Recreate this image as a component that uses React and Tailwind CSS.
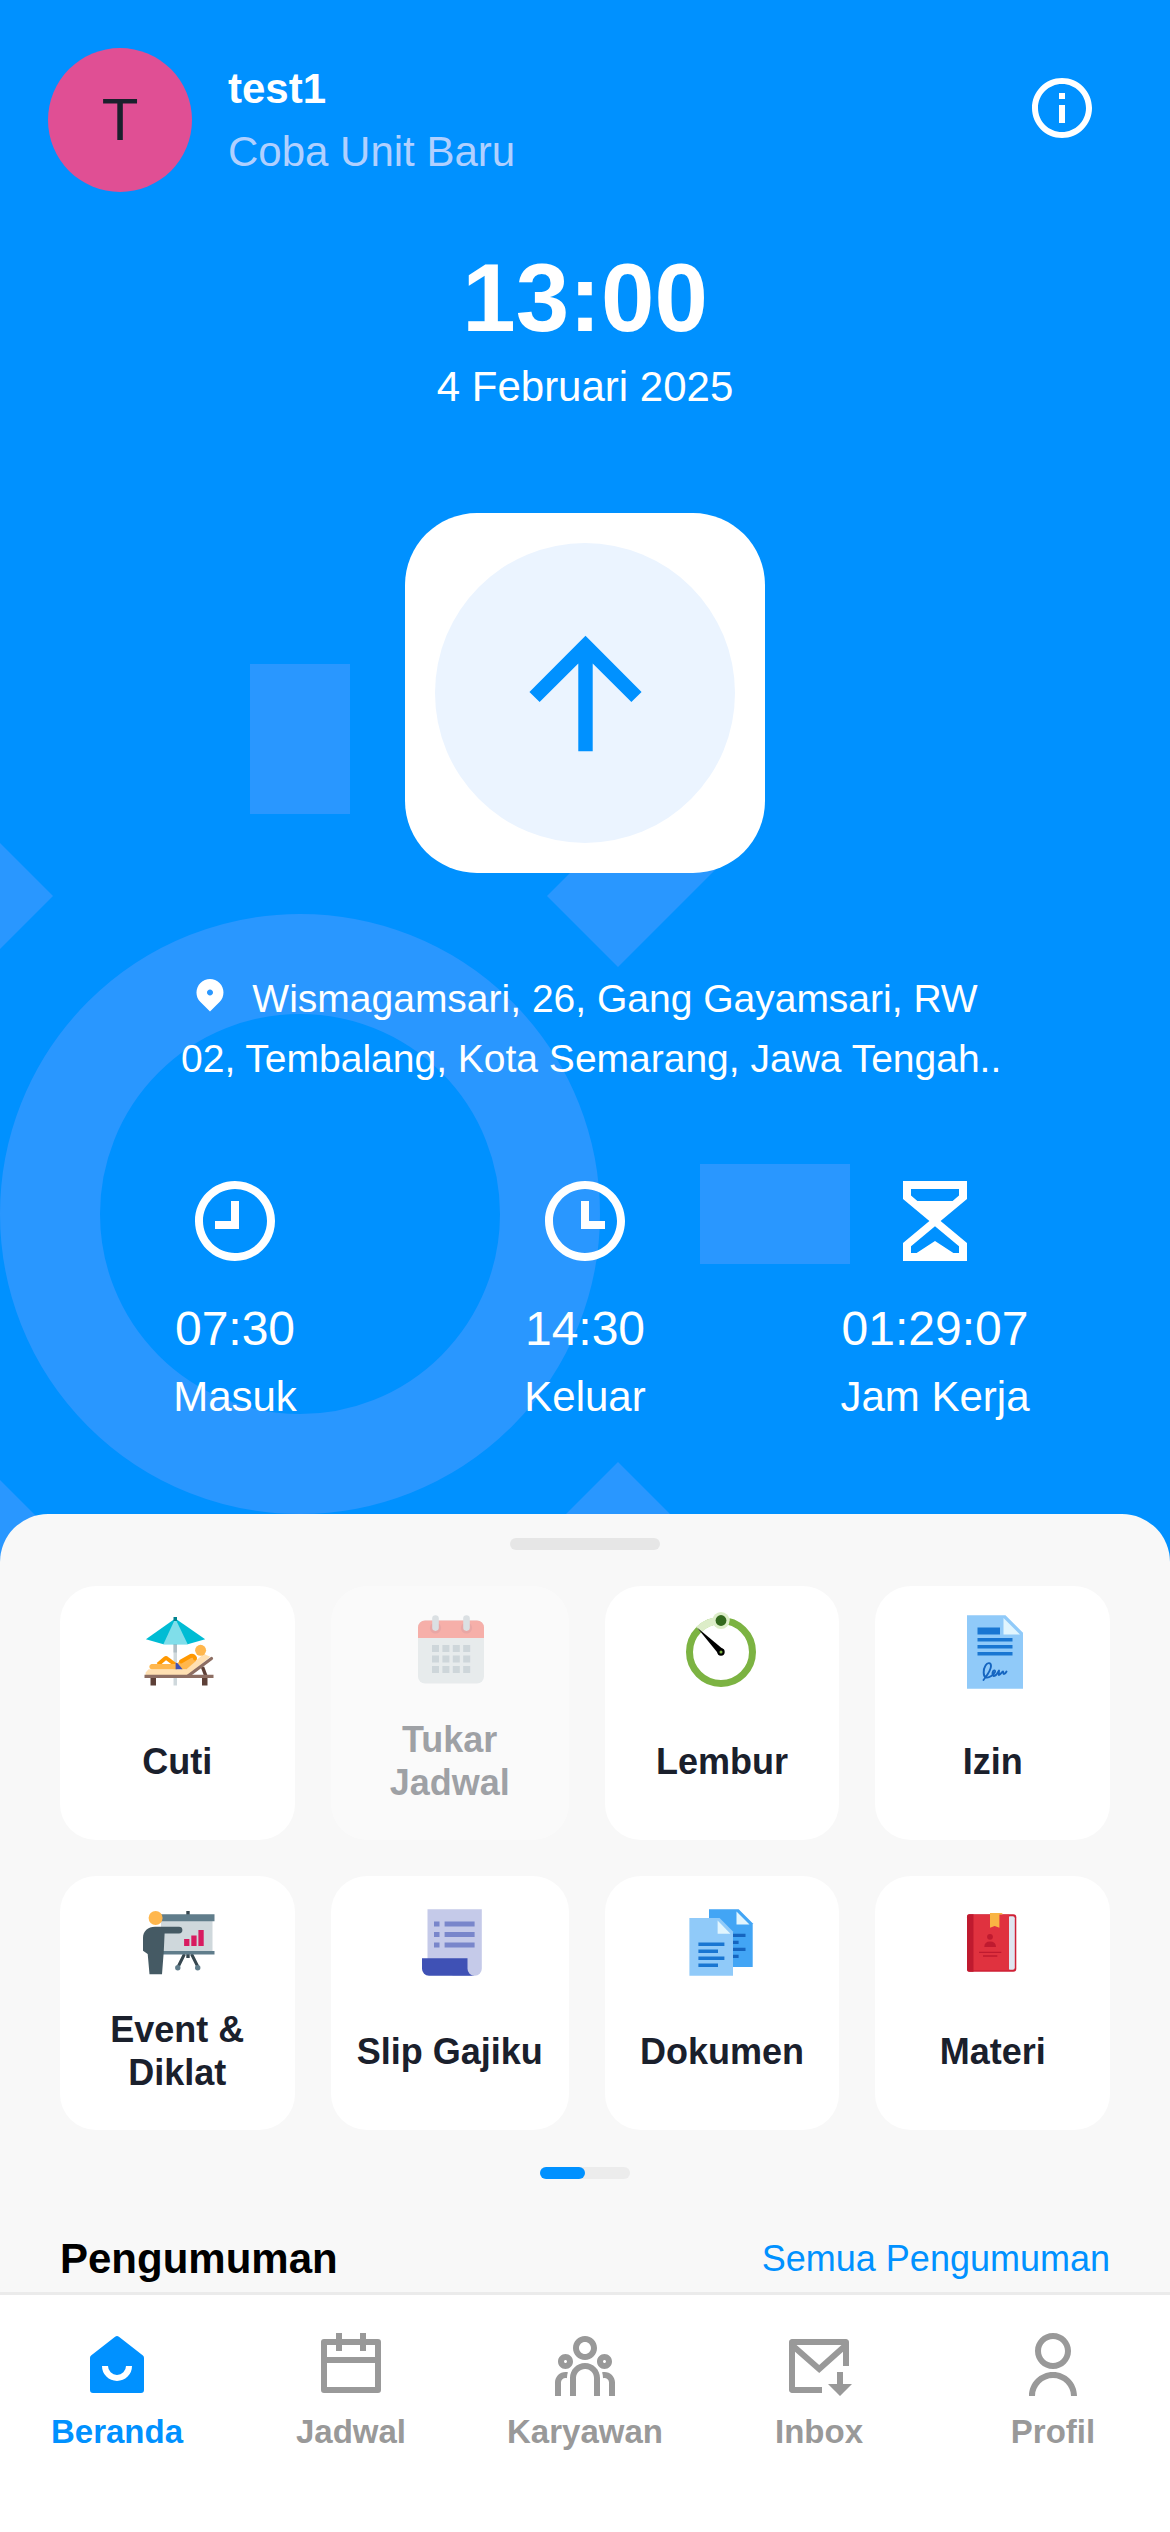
import React from "react";
import {
  RiArrowUpLine,
  RiInformationLine,
  RiMailDownloadLine,
  RiMapPin2Fill,
  RiTeamLine,
  RiTimeLine,
  RiUserLine,
} from "react-icons/ri";

function Backdrop() {
  return (
    <svg
      className="absolute left-0 top-0 h-[1600px] w-[1170px]"
      viewBox="0 0 1170 1600"
      fill="#2997ff"
      aria-hidden="true"
    >
      <rect x="250" y="664" width="100" height="150" />
      <rect x="700" y="1164" width="150" height="100" />
      <path d="M618 967l-71-71 106-106 71 71z" />
      <path d="M-18 967l71-71-106-106-71 71z" />
      <path d="M618 1462l71 71-106 106-71-71z" />
      <path d="M-18 1462l71 71-106 106-71-71z" />
      <circle cx="300" cy="1214" r="250" fill="none" stroke="#2997ff" strokeWidth="100" />
    </svg>
  );
}

function Art({ children }) {
  return (
    <svg className="h-[84px] w-[84px] shrink-0" viewBox="0 0 84 84" aria-hidden="true">
      {children}
    </svg>
  );
}

function LeaveArt() {
  return (
    <Art>
      <path d="M38.5 34h3.5v41.5h-3.5z" fill="#cfd8dc" />
      <path d="M38.5 34h3.5v8.500h-3.500z" fill="#b0bec5" />
      <path d="M40.300 8.500L10.900 29.300l17.500 5h24.300l17.500-5z" fill="#00bcd4" />
      <path d="M40.300 8.500L28.400 34.300h24.300z" fill="#80deea" />
      <path d="M38.500 7h3.500v4h-3.500z" fill="#00838f" />
      <path d="M10.600 65v-2.600l3-3.100H51l17.800-15.600 6.400 3L53.500 65z" fill="#ffe0b2" />
      <path d="M23 54.500l7-6q1-.8 2 0l8 6" fill="none" stroke="#ff9800" strokeWidth="4" strokeLinejoin="round" />
      <path d="M16.500 54H42v5.300H16.500a2.700 2.700 0 010-5.300z" fill="#ffb74d" />
      <path d="M42 53.300l5-3.300 11-4 4 1-1 4-9.500 8.300H46z" fill="#ffb74d" />
      <path d="M46 51.500l9.500-5.500q4-1 4.500 2.500" fill="none" stroke="#ff9800" strokeWidth="4" strokeLinecap="round" />
      <path d="M40.600 52.700l2 .6 5 6h-7z" fill="#3f51b5" />
      <circle cx="65.600" cy="40.300" r="5.500" fill="#ffb74d" />
      <path d="M67.500 57l3.200 8.500" stroke="#5d4037" strokeWidth="3.500" />
      <path d="M53 66l23.500-17.500" stroke="#8d6e63" strokeWidth="3.200" strokeLinecap="round" />
      <path d="M15.500 68H21v7.400h-5.500zM67 68h5.500v7.400H67z" fill="#5d4037" />
      <path d="M9.500 64.700h69V68h-69z" fill="#8d6e63" />
    </Art>
  );
}

function CalendarArt() {
  return (
    <Art>
      <rect x="10" y="10.500" width="66" height="63" rx="7" fill="#cfd8dc" />
      <path d="M10 28V17.500a7 7 0 017-7h52a7 7 0 017 7V28z" fill="#f44336" />
      <circle cx="27.500" cy="18" r="5.600" fill="#c62828" opacity=".7" />
      <circle cx="58.500" cy="18" r="5.600" fill="#c62828" opacity=".7" />
      <rect x="24.200" y="5.300" width="6.600" height="15.600" rx="3.300" fill="#b0bec5" />
      <rect x="55.200" y="5.300" width="6.600" height="15.600" rx="3.300" fill="#b0bec5" />
      <path
        d="M24 35h7v7h-7zM34.400 35h7v7h-7zM44.800 35h7v7h-7zM55.200 35h7v7h-7zM24 45.500h7v7h-7zM34.400 45.500h7v7h-7zM44.800 45.500h7v7h-7zM55.200 45.500h7v7h-7zM24 56h7v7h-7zM34.400 56h7v7h-7zM44.800 56h7v7h-7zM55.200 56h7v7h-7z"
        fill="#90a4ae"
      />
    </Art>
  );
}

function OvertimeArt() {
  return (
    <Art>
      <circle cx="41" cy="42" r="31.500" fill="none" stroke="#7cb342" strokeWidth="7" />
      <path d="M18.700 19.700A31.500 31.500 0 0149 11.500" fill="none" stroke="#dcedc8" strokeWidth="7.400" />
      <circle cx="41" cy="10.500" r="8.600" fill="#dcedc8" />
      <circle cx="41" cy="10.500" r="5.400" fill="#33691e" />
      <path d="M17 17.500L44 40l-5 4.500z" fill="#000" />
      <circle cx="41" cy="42" r="3.700" fill="#000" />
      <circle cx="41" cy="42" r="1.500" fill="#7cb342" />
    </Art>
  );
}

function PermitArt() {
  return (
    <Art>
      <path d="M16 5.300h38.500L72 22.800v56H16z" fill="#90caf9" />
      <path d="M52.500 8v16.600H69z" fill="#e1f5fe" />
      <path d="M26.500 17.500H49v7H26.500zM26.500 28h35v3.500h-35zM26.500 35h35v3.500h-35zM26.500 42h35v3.500h-35z" fill="#1976d2" />
      <path
        d="M32.500 70c2-3 7.500-9 7.500-14 0-3.500-3.500-4-5.500-.5-2.500 4-2.500 11 .5 12 3 1 8-3 9-5.500.6-2.500-2-2-2.500 1s1.500 4 4 1.500l2.500-4c0 2-.5 3.500 0 4.500 2-1 3-3.500 4-3.500.5.500 0 2.500 1 2.500s2-1.500 2.500-2.500"
        fill="none"
        stroke="#1565c0"
        strokeWidth="1.900"
        strokeLinecap="round"
        strokeLinejoin="round"
      />
    </Art>
  );
}

function EventArt() {
  return (
    <Art>
      <path d="M51.300 11h3.400v4h-3.400zM51.300 54h3.400v4h-3.400z" fill="#37474f" />
      <path d="M49.500 54l-6.500 13M56.500 54L63 67" stroke="#37474f" strokeWidth="3" />
      <circle cx="42.800" cy="67.700" r="2.700" fill="#607d8b" />
      <circle cx="62.700" cy="67.700" r="2.700" fill="#607d8b" />
      <path d="M26 21h51.500v31H26z" fill="#cfd8dc" />
      <path d="M26 14.300h53.500v7H26zM26 51h53.500v3.400H26z" fill="#607d8b" />
      <path d="M49.100 39h5.300v7h-5.300zM56.300 35.500h5.300V46h-5.300zM63.400 30h5.300v16h-5.300z" fill="#d81b60" />
      <path
        d="M8 38c0-7 5-11.300 12-11.300h24a3.400 3.400 0 010 6.800H29.600L28.800 51 27 74.200H14.500L12.700 54 8 50.700z"
        fill="#455a64"
      />
      <circle cx="20.600" cy="18" r="7" fill="#ffb74d" />
    </Art>
  );
}

function PayslipArt() {
  return (
    <Art>
      <path d="M19.500 9.300h54.300v59.400a7 7 0 01-7 7H45L19.500 60z" fill="#c5cae9" />
      <path d="M14 58.200h45.500v10.500a7 7 0 007 7H21a7 7 0 01-7-7z" fill="#3f51b5" />
      <path
        d="M26 21.500h5.500v5H26zM36.600 21.500h30v5h-30zM26 32h5.500v5H26zM36.600 32h30v5h-30zM26 42.500h5.500v5H26zM36.600 42.500h30v5h-30z"
        fill="#7986cb"
      />
    </Art>
  );
}

function DocumentsArt() {
  return (
    <Art>
      <path d="M29 9.300h29.700l14 14V67H29z" fill="#42a5f5" />
      <path d="M56.500 11.500v13h13z" fill="#e1f5fe" />
      <path d="M45 33.700h20.500v3.400H45zM45 40.700h13.600v3.400H45zM45 47.700h20.500v3.400H45zM45 54.700h13.600v3.400H45z" fill="#1565c0" />
      <path d="M9.400 18H39.600L53 31.500v44.200H9.400z" fill="#90caf9" />
      <path d="M37.600 20.500v13.200h12.800z" fill="#e1f5fe" />
      <path d="M18.400 42.500h26V46h-26zM18.400 49.500H38V53H18.400zM18.400 56.500h26V60h-26zM18.400 63.500H38V67H18.400z" fill="#1976d2" />
    </Art>
  );
}

function BookArt() {
  return (
    <Art>
      <rect x="16" y="14.300" width="49.300" height="57.500" rx="3" fill="#cf2036" />
      <rect x="57" y="16.300" width="6.800" height="53.500" rx="2" fill="#dfe6f1" />
      <path d="M18 14.800h40v55.500H18z" fill="#e0323f" />
      <path d="M18 14.300h4.500v57.500H18a2 2 0 01-2-2V16.300a2 2 0 012-2z" fill="#bf1a2f" />
      <path d="M39 13h11.500q1.500 0 1 1.500h-3.100v13.200L43.700 26 39 27.700z" fill="#f9b544" />
      <circle cx="39" cy="36.800" r="2.900" fill="#bf1a2f" />
      <path d="M33.300 47q0-5.500 5.800-5.500T45 47z" fill="#bf1a2f" />
      <path d="M28 52.400h22.300M32 56h14.300" stroke="#bf1a2f" strokeWidth="1.400" />
    </Art>
  );
}

function HourglassIcon() {
  return (
    <svg className="size-24" viewBox="0 0 24 24" fill="currentColor" fillRule="evenodd" aria-hidden="true">
      <path d="M4 2h16v4.500L13.400 12l6.600 5.500V22H4v-4.500l6.600-5.500L4 6.500zM6 4v1.600L7.600 7h8.800L18 5.600V4zM12 13.300l-6 5V20h1.400l4.600-3 4.600 3H18v-1.700z" />
    </svg>
  );
}

function HomeIcon() {
  return (
    <svg className="size-[72px]" viewBox="0 0 24 24" fill="currentColor" aria-hidden="true">
      <path d="M21 20a1 1 0 01-1 1H4a1 1 0 01-1-1V9.300a1 1 0 01.36-.77l8-6.300a1 1 0 011.280 0l8 6.300a1 1 0 01.36.77zM7 12a5 5 0 0010 0h-2a3 3 0 01-6 0z" />
    </svg>
  );
}

function CalendarIcon() {
  return (
    <svg className="size-[72px]" viewBox="0 0 24 24" fill="currentColor" aria-hidden="true">
      <path d="M17 3h4a1 1 0 011 1v16a1 1 0 01-1 1H3a1 1 0 01-1-1V4a1 1 0 011-1h4V1h2v2h6V1h2v2zm-2 2H9v2H7V5H4v4h16V5h-3v2h-2V5zm5 6H4v8h16v-8z" />
    </svg>
  );
}

const menu = [
  { label: "Cuti", art: <LeaveArt /> },
  { label: "Tukar Jadwal", art: <CalendarArt />, disabled: true },
  { label: "Lembur", art: <OvertimeArt /> },
  { label: "Izin", art: <PermitArt /> },
  { label: "Event & Diklat", art: <EventArt /> },
  { label: "Slip\u00a0Gajiku", art: <PayslipArt /> },
  { label: "Dokumen", art: <DocumentsArt /> },
  { label: "Materi", art: <BookArt /> },
];

const stats = [
  { value: "07:30", label: "Masuk", icon: <RiTimeLine className="size-24 -scale-x-100" /> },
  { value: "14:30", label: "Keluar", icon: <RiTimeLine className="size-24" /> },
  { value: "01:29:07", label: "Jam Kerja", icon: <HourglassIcon /> },
];

const tabs = [
  { label: "Beranda", icon: <HomeIcon />, active: true },
  { label: "Jadwal", icon: <CalendarIcon /> },
  { label: "Karyawan", icon: <RiTeamLine className="size-[72px]" /> },
  { label: "Inbox", icon: <RiMailDownloadLine className="size-[72px]" /> },
  { label: "Profil", icon: <RiUserLine className="size-[72px]" /> },
];

export default function App() {
  return (
    <div className="relative flex min-h-screen flex-col overflow-hidden bg-[#0091ff] font-['Liberation_Sans',Arial,sans-serif] text-white">
      <Backdrop />

      <header className="relative flex items-start px-12 pt-12">
        <div className="flex flex-1 items-center gap-9">
          <div className="flex size-36 items-center justify-center rounded-full bg-[#e04f94] text-[60px] leading-none text-[#1a202c]">
            T
          </div>
          <div className="text-[42px] leading-[63px]">
            <h1 className="font-bold">test1</h1>
            <p className="text-[#b0d0ff]">Coba Unit Baru</p>
          </div>
        </div>
        <button type="button" aria-label="Informasi" className="p-6">
          <RiInformationLine className="size-[72px]" />
        </button>
      </header>

      <main className="relative flex flex-1 flex-col">
        <section className="flex flex-col items-center pt-12 text-center">
          <p className="text-[96px] leading-[115px] font-bold">13:00</p>
          <p className="text-[42px] leading-[63px]">4 Februari 2025</p>

          <button
            type="button"
            aria-label="Absen"
            className="mt-[95px] flex size-[360px] items-center justify-center rounded-[72px] bg-white"
          >
            <span className="flex size-[300px] items-center justify-center rounded-full bg-[#ebf4ff] text-[#0091ff]">
              <RiArrowUpLine className="size-[173px]" />
            </span>
          </button>

          <p className="mt-24 w-[808px] text-[39px] leading-[60px] whitespace-nowrap">
            <RiMapPin2Fill className="mr-6 inline size-9 align-baseline" />
            Wismagamsari, 26, Gang Gayamsari, RW
            <br />
            02, Tembalang, Kota Semarang, Jawa Tengah..
          </p>

          <dl className="mt-[84px] grid w-full grid-cols-3 px-[60px]">
            {stats.map((s) => (
              <div key={s.label} className="flex flex-col items-center">
                {s.icon}
                <dd className="mt-6 text-[48px] leading-[72px]">{s.value}</dd>
                <dt className="text-[42px] leading-[63px]">{s.label}</dt>
              </div>
            ))}
          </dl>
        </section>

        <section className="mt-[86px] flex-1 rounded-t-[48px] bg-[#f8f8f8] px-[60px] pt-6 text-[#1a202c]">
          <div className="mx-auto h-3 w-[150px] rounded-full bg-[#e6e6e6]" />

          <div className="mt-9 grid grid-cols-[repeat(4,1fr)] gap-9">
            {menu.map((m) => (
              <button
                key={m.label}
                type="button"
                disabled={m.disabled}
                className="flex min-h-[254px] flex-col items-center rounded-[36px] bg-white px-[26px] py-6 disabled:opacity-40"
              >
                {m.art}
                <span className="flex flex-1 items-center pt-3 text-[36px] leading-[43px] font-bold">{m.label}</span>
              </button>
            ))}
          </div>

          <div className="mx-auto mt-[37px] h-3 w-[90px] rounded-full bg-[#ececec]">
            <div className="h-3 w-[45px] rounded-full bg-[#0091ff]" />
          </div>

          <div className="mt-12 flex items-center justify-between">
            <h2 className="text-[42px] leading-[63px] font-bold text-black">Pengumuman</h2>
            <a href="#pengumuman" className="text-[36px] leading-[54px] text-[#0091ff]">
              Semua Pengumuman
            </a>
          </div>
        </section>
      </main>

      <nav className="sticky bottom-0 grid grid-cols-5 border-t-3 border-[#ebebeb] bg-white pt-[35px] pb-20">
        {tabs.map((t) => (
          <a
            key={t.label}
            href={"#" + t.label.toLowerCase()}
            aria-current={t.active ? "page" : undefined}
            className="flex flex-col items-center gap-[10px] text-[33px] leading-10 font-bold text-[#999999] aria-[current=page]:text-[#0091ff]"
          >
            {t.icon}
            {t.label}
          </a>
        ))}
      </nav>
    </div>
  );
}
